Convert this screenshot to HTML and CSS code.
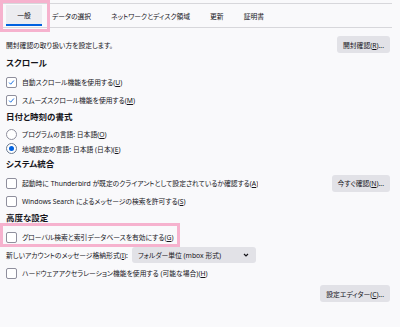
FILE: index.html
```html
<!DOCTYPE html>
<html>
<head>
    <link rel="stylesheet" href="styles.css">
</head>
<body>
    <div class="page">
        <div class="tabs">
            <div class="tab active">一般</div>
            <div class="tab">データの選択</div>
            <div class="tab">ネットワークとディスク領域</div>
            <div class="tab">更新</div>
            <div class="tab">証明書</div>
        </div>

        <div class="content">
            <div class="row between desc">
                <span>開封確認の取り扱い方を設定します。</span>
                <button class="btn">開封確認(<u>R</u>)...</button>
            </div>

            <h3>スクロール</h3>
            <div class="row">
                <span class="cb"><svg viewBox="0 0 11 11"><path d="M2.6 5.6 L4.5 7.6 L8.4 3.1"/></svg></span>
                <span>自動スクロール機能を使用する(<u>U</u>)</span>
            </div>
            <div class="row">
                <span class="cb"><svg viewBox="0 0 11 11"><path d="M2.6 5.6 L4.5 7.6 L8.4 3.1"/></svg></span>
                <span>スムーズスクロール機能を使用する(<u>M</u>)</span>
            </div>

            <h3>日付と時刻の書式</h3>
            <div class="row radio-row">
                <span class="radio"></span>
                <span>プログラムの言語: 日本語(<u>O</u>)</span>
            </div>
            <div class="row radio-row">
                <span class="radio checked"></span>
                <span>地域設定の言語: 日本語 (日本)(<u>E</u>)</span>
            </div>

            <h3>システム統合</h3>
            <div class="row between">
                <div class="row-inner">
                    <span class="cb"></span>
                    <span>起動時に Thunderbird が既定のクライアントとして設定されているか確認する(<u>A</u>)</span>
                </div>
                <button class="btn">今すぐ確認(<u>N</u>)...</button>
            </div>
            <div class="row">
                <span class="cb"></span>
                <span>Windows Search によるメッセージの検索を許可する(<u>S</u>)</span>
            </div>

            <h3>高度な設定</h3>
            <div class="row">
                <span class="cb"></span>
                <span>グローバル検索と索引データベースを有効にする(<u>G</u>)</span>
            </div>
            <div class="row">
                <span>新しいアカウントのメッセージ格納形式(<u>I</u>):</span>
                <div class="select">
                    <span>フォルダー単位 (mbox 形式)</span>
                    <svg viewBox="0 0 6 4"><path d="M1 1 L3 3 L5 1"/></svg>
                </div>
            </div>
            <div class="row">
                <span class="cb"></span>
                <span>ハードウェアアクセラレーション機能を使用する (可能な場合)(<u>H</u>)</span>
            </div>
            <div class="row-end">
                <button class="btn">設定エディター(<u>C</u>)...</button>
            </div>
        </div>

        <div class="mark mark-tab"></div>
        <div class="mark mark-search"></div>
    </div>
</body>
</html>
```

FILE: styles.css
```css
body {
    margin: 0;
    background: #f9f9fb;
    color: #15141a;
    font-family: "Noto Sans", "Noto Sans CJK JP", sans-serif;
    font-size: 6.8px;
    font-feature-settings: "palt";
}

.page {
    position: relative;
    width: 400px;
    height: 327px;
    overflow: hidden;
}

.tabs {
    display: flex;
    margin: 3px 8px 0 0;
    height: 23px;
    border-top: 1px solid #d7d7db;
    border-bottom: 1px solid #d7d7db;
}

.tab {
    display: flex;
    align-items: center;
    justify-content: center;
    padding: 0 10px;
    margin-top: 1px;
    white-space: nowrap;
}

.tab.active {
    width: 36px;
    box-sizing: border-box;
    padding: 0;
    margin-left: 6px;
    background: #ececf0;
    border-bottom: 2px solid #0061e0;
    margin-bottom: 1px;
}

.content {
    padding: 8px 10px 0 6px;
}

h3 {
    margin: 1px 0 3px;
    height: 14px;
    line-height: 14px;
    font-size: 8.5px;
    font-weight: bold;
}

.row {
    display: flex;
    align-items: center;
    height: 18px;
    white-space: nowrap;
}

.row.desc {
    height: 17px;
    margin-bottom: 3px;
}

.radio-row {
    height: 14.5px;
}

.between {
    justify-content: space-between;
}

.row-inner {
    display: flex;
    align-items: center;
    overflow: hidden;
}

.row-end {
    display: flex;
    justify-content: flex-end;
    margin-top: 3px;
}

.cb, .radio {
    flex: none;
    width: 11px;
    height: 11px;
    box-sizing: border-box;
    border: 1px solid #8f8f9d;
    border-radius: 2px;
    background: #fff;
    margin-right: 5px;
    display: flex;
    align-items: center;
    justify-content: center;
}

.cb svg {
    width: 11px;
    height: 11px;
    fill: none;
    stroke: #0061e0;
    stroke-width: 1.1;
}

.radio {
    border-radius: 50%;
}

.radio.checked {
    border-color: #6b7a90;
}

.radio.checked::after {
    content: "";
    width: 5px;
    height: 5px;
    border-radius: 50%;
    background: #0061e0;
}

.btn {
    font: inherit;
    color: inherit;
    border: none;
    border-radius: 3px;
    background: #e2e2e7;
    height: 17px;
    padding: 0 6px;
    white-space: nowrap;
}

.select {
    display: flex;
    align-items: center;
    justify-content: space-between;
    width: 124px;
    height: 16px;
    box-sizing: border-box;
    margin-left: 4px;
    padding: 0 7px 0 6px;
    border-radius: 3px;
    background: #e2e2e7;
}

.select svg {
    width: 6px;
    height: 4px;
    fill: none;
    stroke: #15141a;
    stroke-width: 1.2;
}

.mark {
    position: absolute;
    border: 3px solid #f6b2ce;
    box-sizing: border-box;
}

.mark-tab {
    left: 0;
    top: 0;
    width: 50px;
    height: 32px;
}

.mark-search {
    left: 0;
    top: 223px;
    width: 180px;
    height: 24px;
}
```
